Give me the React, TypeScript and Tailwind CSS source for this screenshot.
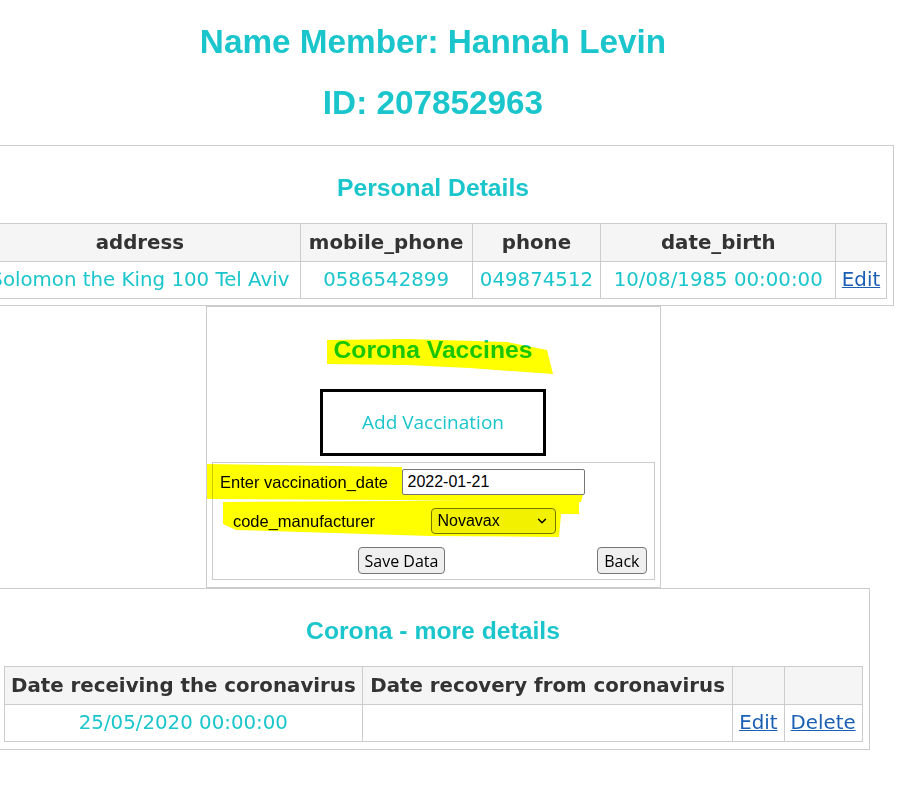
import { ChevronDown } from 'lucide-react';

const teal = 'text-[#1ac6cc]';

type Col = { label: string; width: number };

const personalCols: Col[] = [
  { label: 'address', width: 321 },
  { label: 'mobile_phone', width: 172 },
  { label: 'phone', width: 129 },
  { label: 'date_birth', width: 235 },
  { label: '', width: 51 },
];

const coronaCols: Col[] = [
  { label: 'Date receiving the coronavirus', width: 359 },
  { label: 'Date recovery from coronavirus', width: 370 },
  { label: '', width: 52 },
  { label: '', width: 78 },
];

const DataTable = ({ cols, children }: { cols: Col[]; children: React.ReactNode }) => (
  <table className="table-fixed border-collapse font-['DejaVu_Sans',sans-serif] text-[19.8px]">
    <colgroup>
      {cols.map((c, i) => (
        <col key={i} style={{ width: c.width }} />
      ))}
    </colgroup>
    <thead>
      <tr className="h-[38px]">
        {cols.map((c, i) => (
          <th key={i} className="border border-[#cccccc] bg-[#f5f5f5] px-1 text-center text-[19.8px] font-bold whitespace-nowrap text-[#333333]">
            {c.label}
          </th>
        ))}
      </tr>
    </thead>
    <tbody>{children}</tbody>
  </table>
);

const Cell = ({ children }: { children?: React.ReactNode }) => (
  <td className={`h-[37px] border border-[#cccccc] px-1 text-center whitespace-nowrap ${teal}`}>{children}</td>
);

const LinkText = ({ children }: { children: React.ReactNode }) => (
  <a href="#" className="text-[#1a5fb4] underline">
    {children}
  </a>
);

const Title = ({ children }: { children: React.ReactNode }) => (
  <h2 className={`h-[28px] text-center font-['Liberation_Sans',Arial,sans-serif] text-[24.7px] leading-[28px] font-bold ${teal}`}>
    {children}
  </h2>
);

export default function App() {
  return (
    <div className="min-h-[798px] bg-white">
      <div className="flex w-[866px] flex-col items-center">
        <h1 className={`mt-[23px] h-[38px] font-['Liberation_Sans',Arial,sans-serif] text-[33.3px] leading-[38px] font-bold ${teal}`}>
          Name Member: Hannah Levin
        </h1>
        <h1 className={`mt-[23px] h-[38px] font-['Liberation_Sans',Arial,sans-serif] text-[33.3px] leading-[38px] font-bold ${teal}`}>
          ID: 207852963
        </h1>

        <section className="mt-[23px] w-[922px] shrink-0 border border-[#cccccc] px-[6px] pt-[28px] pb-[6px]">
          <Title>Personal Details</Title>
          <div className="mt-[21px]">
            <DataTable cols={personalCols}>
              <tr>
                <Cell>Solomon the King 100 Tel Aviv</Cell>
                <Cell>0586542899</Cell>
                <Cell>049874512</Cell>
                <Cell>10/08/1985 00:00:00</Cell>
                <Cell>
                  <LinkText>Edit</LinkText>
                </Cell>
              </tr>
            </DataTable>
          </div>
        </section>

        <section className="relative w-[455px] shrink-0 border border-[#cccccc] px-[5px] pt-[29px] pb-[7px]">
          {/* marker strokes drawn over the screenshot */}
          <svg className="pointer-events-none absolute top-0 left-0 z-10 mix-blend-multiply" width="455" height="282">
            <polygon fill="#ffff00" points="120,33 200,32 300,35 340,43 346,67 262,61 200,58 120,57" />
            <polygon fill="#ffff00" points="0,157 195,160 195,181 280,181 354,183 376,188 374,195 280,194 195,193 0,192" />
            <polygon fill="#ffff00" points="16,195 194,194 372,192 372,207 354,207 352,230 224,229 29,223 16,217" />
          </svg>

          <Title>Corona Vaccines</Title>

          <div className="mt-[25px] flex justify-center">
            <div className={`flex h-[67px] w-[226px] items-center justify-center border-[3px] border-black font-['Open_Sans',sans-serif] text-[19px] ${teal}`}>
              Add Vaccination
            </div>
          </div>

          <form className="mt-[6px] h-[118px] border border-[#cccccc] px-0 pt-[6px] font-['Liberation_Sans',Arial,sans-serif] text-[16.5px] text-black">
            <div className="flex h-[26px] items-center">
              <label className="w-[183px] text-center">Enter vaccination_date</label>
              <div className="flex w-[195px] justify-center">
                <div className="relative z-20 flex h-[26px] w-[183px] items-center rounded-[2px] border border-[#767676] bg-white pl-[5px] text-[16px]">
                  2022-01-21
                </div>
              </div>
            </div>
            <div className="mt-[13px] flex h-[26px] items-center">
              <label className="w-[183px] text-center">code_manufacturer</label>
              <div className="flex w-[195px] justify-center">
                <div className="flex h-[26px] w-[125px] items-center justify-between rounded-[4px] border border-[#767676] bg-[#f2f2f2] pr-[6px] pl-[6px] text-[16px]">
                  <span>Novavax</span>
                  <ChevronDown size={14} strokeWidth={2.5} />
                </div>
              </div>
            </div>
            <div className="mt-[13px] flex h-[27px] items-center justify-between pr-[7px] pl-[145px] font-['Open_Sans',sans-serif] text-[16px] text-black">
              <button type="button" className="h-[27px] rounded-[4px] border border-[#767676] bg-[#efefef] px-[6px] leading-none">
                Save Data
              </button>
              <button type="button" className="h-[27px] rounded-[4px] border border-[#767676] bg-[#efefef] px-[6px] leading-none">
                Back
              </button>
            </div>
          </form>
        </section>

        <section className="w-[873px] shrink-0 border border-[#cccccc] px-[6px] pt-[28px] pb-[7px]">
          <Title>Corona - more details</Title>
          <div className="mt-[21px]">
            <DataTable cols={coronaCols}>
              <tr>
                <Cell>25/05/2020 00:00:00</Cell>
                <Cell />
                <Cell>
                  <LinkText>Edit</LinkText>
                </Cell>
                <Cell>
                  <LinkText>Delete</LinkText>
                </Cell>
              </tr>
            </DataTable>
          </div>
        </section>
      </div>
    </div>
  );
}
